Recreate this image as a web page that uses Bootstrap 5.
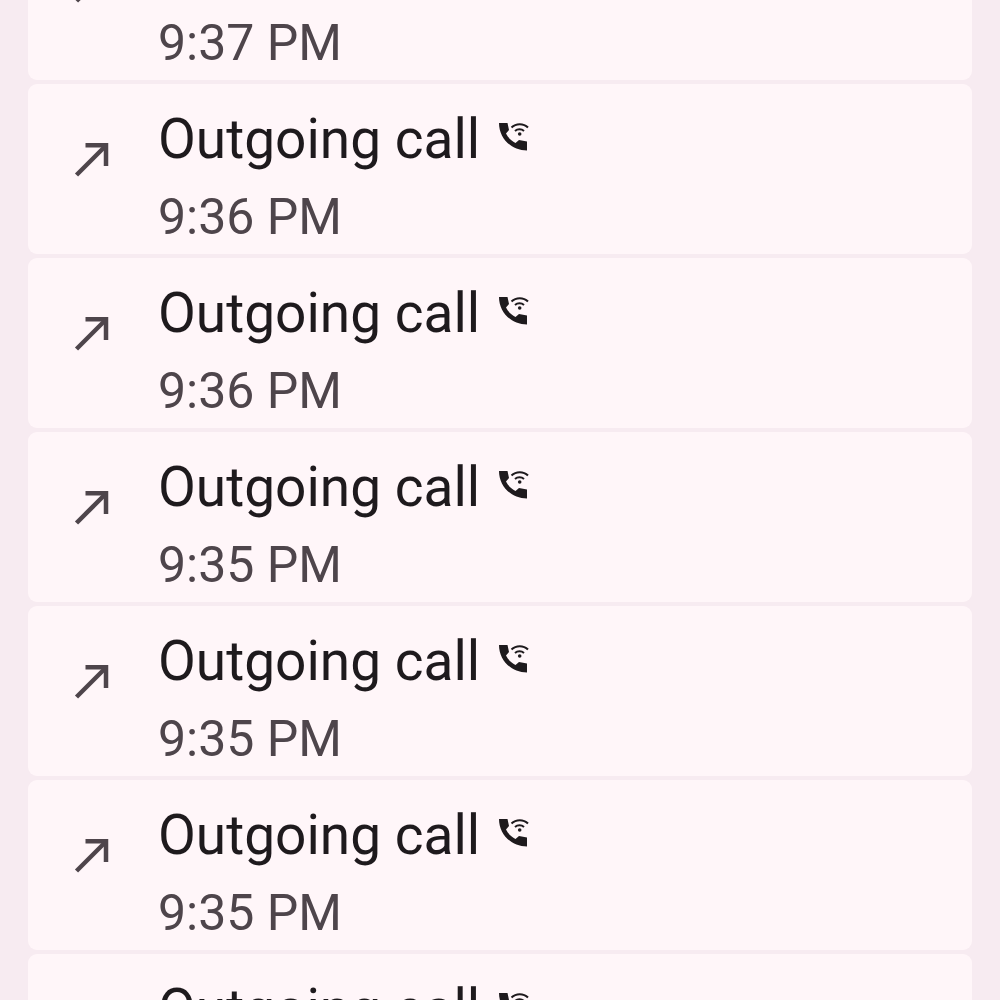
<!DOCTYPE html>
<html lang="en">
<head>
  <meta charset="UTF-8" />
  <meta name="viewport" content="width=device-width, initial-scale=1.0"/>
  <title>Call details</title>
  <link href="https://cdn.jsdelivr.net/npm/bootstrap@5.3.2/dist/css/bootstrap.min.css" rel="stylesheet">
  <style>
    html, body { height: 100%; overflow: hidden; }
    body { background: #f7ebf1; font-family: Roboto, "Liberation Sans", sans-serif; }
    .call-list { margin-top: -90px; padding: 0 28px; gap: 4px; }
    .call-row { height: 170px; background: #fff6f9; border-radius: 9px; flex: none; }
    .call-arrow { width: 130px; padding: 58px 0 0 45px; flex: none; }
    .call-arrow svg { display: block; }
    .call-text { padding-top: 22px; }
    .call-title { font-size: 55px; line-height: 66px; color: #1e1a1d; }
    .call-time { font-size: 50px; line-height: 66px; margin-top: 12px; color: #4e454b; }
    .call-wifi { margin-left: 19px; margin-top: 16px; flex: none; }
  </style>
</head>
<body>

  <div class="call-list d-flex flex-column" id="calls"></div>

  <script>
    const times = ["9:37 PM", "9:36 PM", "9:36 PM", "9:35 PM", "9:35 PM", "9:35 PM", "9:35 PM"];

    const arrow = `<svg width="36" height="36" viewBox="0 0 36 36" fill="none" stroke="#4e454b" stroke-width="4.5">
      <path d="M3.500 33 L32 4.500"/><path d="M12.500 3.200 H33 V24"/></svg>`;

    const wifiCall = `<svg class="call-wifi" width="30" height="30" viewBox="0 0 30 30">
      <path fill="#1e1a1d" d="M0 1 H8.500 L10 8 L7 11.500 C9 15.500 12.500 19 16.500 21 L20 18 L28 19.500 V28.500 C12 28.500 0 16 0 1 Z"/>
      <g fill="none" stroke="#1e1a1d" stroke-width="2">
        <path d="M12.500 5.500 C17 1 24.500 1 29 5.500"/><path d="M16 9 C18.500 6.800 22.500 6.800 25 9"/>
      </g>
      <circle cx="20.700" cy="12" r="1.800" fill="#1e1a1d"/></svg>`;

    document.getElementById("calls").innerHTML = times.map(t => `
      <div class="call-row d-flex">
        <div class="call-arrow">${arrow}</div>
        <div class="call-text">
          <div class="d-flex align-items-start">
            <span class="call-title">Outgoing call</span>${wifiCall}
          </div>
          <div class="call-time">${t}</div>
        </div>
      </div>`).join("");
  </script>
  <script src="https://cdn.jsdelivr.net/npm/bootstrap@5.3.2/dist/js/bootstrap.bundle.min.js"></script>
</body>
</html>
